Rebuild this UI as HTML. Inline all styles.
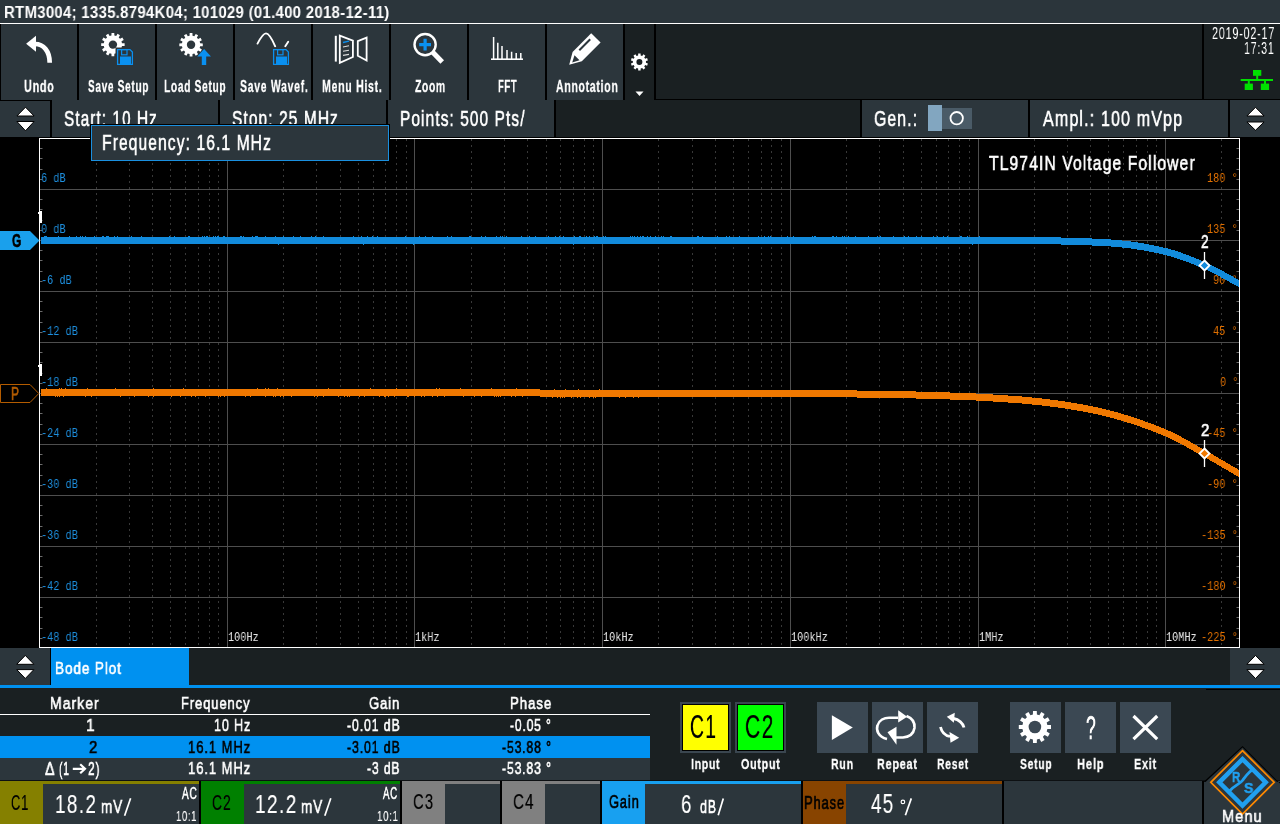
<!DOCTYPE html>
<html><head><meta charset="utf-8"><style>
html,body{margin:0;padding:0;background:#000;width:1280px;height:824px;overflow:hidden}
#root{position:relative;width:1280px;height:824px;overflow:hidden}
#root div,#root span,#root svg{position:absolute}
#root span{white-space:pre;transform-origin:0 0;will-change:transform}
</style></head><body><div id="root">
<div style="left:0px;top:0px;width:1280px;height:23px;background:#2b353b;z-index:0;"></div><div style="left:0px;top:23px;width:1280px;height:1px;background:#ffffff;z-index:0;"></div><div style="left:0px;top:24px;width:1280px;height:113px;background:#000;z-index:0;"></div><div style="left:1px;top:24px;width:76px;height:76px;background:#2c363c;z-index:0;"></div><div style="left:79px;top:24px;width:76px;height:76px;background:#2c363c;z-index:0;"></div><div style="left:157px;top:24px;width:76px;height:76px;background:#2c363c;z-index:0;"></div><div style="left:235px;top:24px;width:76px;height:76px;background:#2c363c;z-index:0;"></div><div style="left:313px;top:24px;width:76px;height:76px;background:#2c363c;z-index:0;"></div><div style="left:391px;top:24px;width:76px;height:76px;background:#2c363c;z-index:0;"></div><div style="left:469px;top:24px;width:76px;height:76px;background:#2c363c;z-index:0;"></div><div style="left:547px;top:24px;width:76px;height:76px;background:#2c363c;z-index:0;"></div><div style="left:625px;top:24px;width:29px;height:76px;background:#1a2022;z-index:0;"></div><div style="left:656px;top:24px;width:546px;height:75px;background:#1a2022;z-index:0;"></div><div style="left:1204px;top:24px;width:76px;height:75px;background:#1a2022;z-index:0;"></div><div style="left:0px;top:101px;width:50px;height:36px;background:#2c363c;z-index:0;"></div><div style="left:52px;top:100px;width:166px;height:37px;background:#2c363c;z-index:0;"></div><div style="left:220px;top:100px;width:166px;height:37px;background:#2c363c;z-index:0;"></div><div style="left:388px;top:100px;width:166px;height:37px;background:#2c363c;z-index:0;"></div><div style="left:556px;top:100px;width:304px;height:37px;background:#1a2022;z-index:0;"></div><div style="left:862px;top:100px;width:166px;height:37px;background:#2c363c;z-index:0;"></div><div style="left:1030px;top:100px;width:198px;height:37px;background:#2c363c;z-index:0;"></div><div style="left:1230px;top:100px;width:50px;height:37px;background:#2c363c;z-index:0;"></div><div style="left:928px;top:105px;width:14px;height:26px;background:#82a6c0;z-index:0;"></div><div style="left:942px;top:108px;width:30px;height:21px;background:#4a5b67;z-index:0;"></div><div style="left:0px;top:648px;width:50px;height:37px;background:#2c363c;z-index:0;"></div><div style="left:51px;top:648px;width:138px;height:37px;background:#0091f0;z-index:0;"></div><div style="left:189px;top:648px;width:1091px;height:37px;background:#1a2022;z-index:0;"></div><div style="left:0px;top:685px;width:1280px;height:3px;background:#0091f0;z-index:0;"></div><div style="left:0px;top:688px;width:1280px;height:93px;background:#1a2022;z-index:0;"></div><div style="left:0px;top:714px;width:650px;height:1px;background:#ffffff;z-index:0;"></div><div style="left:0px;top:736px;width:650px;height:22px;background:#0091f0;z-index:0;"></div><div style="left:0px;top:758px;width:650px;height:22px;background:#2c363c;z-index:0;"></div><div style="left:0px;top:780px;width:1280px;height:1px;background:#0d1012;z-index:0;"></div><div style="left:680px;top:702px;width:51px;height:51px;background:#3a4650;z-index:0;"></div><div style="left:682px;top:704px;width:47px;height:47px;background:#000;z-index:0;"></div><div style="left:683px;top:705px;width:45px;height:45px;background:#ffff00;z-index:0;"></div><div style="left:735px;top:702px;width:51px;height:51px;background:#3a4650;z-index:0;"></div><div style="left:737px;top:704px;width:47px;height:47px;background:#000;z-index:0;"></div><div style="left:738px;top:705px;width:45px;height:45px;background:#00ff00;z-index:0;"></div><div style="left:817px;top:702px;width:51px;height:51px;background:#3b4853;z-index:0;"></div><div style="left:872px;top:702px;width:51px;height:51px;background:#3b4853;z-index:0;"></div><div style="left:927px;top:702px;width:51px;height:51px;background:#3b4853;z-index:0;"></div><div style="left:1010px;top:702px;width:51px;height:51px;background:#3b4853;z-index:0;"></div><div style="left:1065px;top:702px;width:51px;height:51px;background:#3b4853;z-index:0;"></div><div style="left:1120px;top:702px;width:51px;height:51px;background:#3b4853;z-index:0;"></div><div style="left:0px;top:781px;width:1280px;height:43px;background:#000;z-index:0;"></div><div style="left:0px;top:781px;width:43px;height:43px;background:#858000;z-index:0;"></div><div style="left:43px;top:781px;width:156px;height:3px;background:#858000;z-index:0;"></div><div style="left:43px;top:784px;width:156px;height:40px;background:#2c363c;z-index:0;"></div><div style="left:201px;top:781px;width:43px;height:43px;background:#008000;z-index:0;"></div><div style="left:244px;top:781px;width:156px;height:3px;background:#008000;z-index:0;"></div><div style="left:244px;top:784px;width:156px;height:40px;background:#2c363c;z-index:0;"></div><div style="left:402px;top:781px;width:43px;height:43px;background:#808080;z-index:0;"></div><div style="left:445px;top:781px;width:55px;height:3px;background:#808080;z-index:0;"></div><div style="left:445px;top:784px;width:55px;height:40px;background:#2c363c;z-index:0;"></div><div style="left:502px;top:781px;width:43px;height:43px;background:#808080;z-index:0;"></div><div style="left:545px;top:781px;width:55px;height:3px;background:#808080;z-index:0;"></div><div style="left:545px;top:784px;width:55px;height:40px;background:#2c363c;z-index:0;"></div><div style="left:602px;top:781px;width:43px;height:43px;background:#18a0f0;z-index:0;"></div><div style="left:645px;top:781px;width:156px;height:3px;background:#18a0f0;z-index:0;"></div><div style="left:645px;top:784px;width:156px;height:40px;background:#2c363c;z-index:0;"></div><div style="left:803px;top:781px;width:43px;height:43px;background:#884400;z-index:0;"></div><div style="left:846px;top:781px;width:156px;height:3px;background:#884400;z-index:0;"></div><div style="left:846px;top:784px;width:156px;height:40px;background:#2c363c;z-index:0;"></div><div style="left:1004px;top:781px;width:198px;height:43px;background:#2c363c;z-index:0;"></div><div style="left:1206px;top:689px;width:74px;height:1px;background:#000;z-index:0;"></div><div style="left:1204px;top:781px;width:76px;height:43px;background:#2c363c;z-index:0;"></div><div style="left:1230px;top:648px;width:50px;height:37px;background:#2c363c;z-index:0;"></div>
<svg style="left:0;top:0;z-index:1" width="1280" height="824" viewBox="0 0 1280 824">
<path d="M96.5 139V647M129.5 139V647M152.5 139V647M170.5 139V647M185.5 139V647M198.5 139V647M209.5 139V647M218.5 139V647M283.5 139V647M316.5 139V647M340.5 139V647M358.5 139V647M373.5 139V647M385.5 139V647M396.5 139V647M406.5 139V647M471.5 139V647M504.5 139V647M527.5 139V647M546.5 139V647M560.5 139V647M573.5 139V647M584.5 139V647M593.5 139V647M658.5 139V647M692.5 139V647M715.5 139V647M733.5 139V647M748.5 139V647M761.5 139V647M771.5 139V647M781.5 139V647M846.5 139V647M879.5 139V647M903.5 139V647M921.5 139V647M936.5 139V647M948.5 139V647M959.5 139V647M969.5 139V647M1034.5 139V647M1067.5 139V647M1090.5 139V647M1108.5 139V647M1123.5 139V647M1136.5 139V647M1147.5 139V647M1156.5 139V647M1221.5 139V647" stroke="#383838" stroke-width="1" stroke-dasharray="2 4" fill="none"/>
<path d="M40 189.5H1239M40 240.5H1239M40 291.5H1239M40 342.5H1239M40 393.5H1239M40 444.5H1239M40 495.5H1239M40 546.5H1239M40 597.5H1239M227.5 139V647M414.5 139V647M602.5 139V647M790.5 139V647M978.5 139V647M1165.5 139V647" stroke="#4e4e4e" stroke-width="1" fill="none"/>
<path d="M40 148.5h2.5M1236.5 148.5h2.5M40 158.5h2.5M1236.5 158.5h2.5M40 169.5h2.5M1236.5 169.5h2.5M40 179.5h2.5M1236.5 179.5h2.5M40 199.5h2.5M1236.5 199.5h2.5M40 209.5h2.5M1236.5 209.5h2.5M40 220.5h2.5M1236.5 220.5h2.5M40 230.5h2.5M1236.5 230.5h2.5M40 250.5h2.5M1236.5 250.5h2.5M40 260.5h2.5M1236.5 260.5h2.5M40 271.5h2.5M1236.5 271.5h2.5M40 281.5h2.5M1236.5 281.5h2.5M40 301.5h2.5M1236.5 301.5h2.5M40 311.5h2.5M1236.5 311.5h2.5M40 322.5h2.5M1236.5 322.5h2.5M40 332.5h2.5M1236.5 332.5h2.5M40 352.5h2.5M1236.5 352.5h2.5M40 362.5h2.5M1236.5 362.5h2.5M40 373.5h2.5M1236.5 373.5h2.5M40 383.5h2.5M1236.5 383.5h2.5M40 403.5h2.5M1236.5 403.5h2.5M40 413.5h2.5M1236.5 413.5h2.5M40 424.5h2.5M1236.5 424.5h2.5M40 434.5h2.5M1236.5 434.5h2.5M40 454.5h2.5M1236.5 454.5h2.5M40 464.5h2.5M1236.5 464.5h2.5M40 475.5h2.5M1236.5 475.5h2.5M40 485.5h2.5M1236.5 485.5h2.5M40 505.5h2.5M1236.5 505.5h2.5M40 515.5h2.5M1236.5 515.5h2.5M40 526.5h2.5M1236.5 526.5h2.5M40 536.5h2.5M1236.5 536.5h2.5M40 556.5h2.5M1236.5 556.5h2.5M40 566.5h2.5M1236.5 566.5h2.5M40 577.5h2.5M1236.5 577.5h2.5M40 587.5h2.5M1236.5 587.5h2.5M40 607.5h2.5M1236.5 607.5h2.5M40 617.5h2.5M1236.5 617.5h2.5M40 628.5h2.5M1236.5 628.5h2.5M40 638.5h2.5M1236.5 638.5h2.5" stroke="#6a6a6a" stroke-width="1" fill="none"/>
<rect x="39.5" y="138.5" width="1200" height="509" stroke="#fff" stroke-width="1" fill="none"/>
</svg>
<svg style="left:0;top:0;z-index:3" width="1280" height="824" viewBox="0 0 1280 824">
<path d="M41 237V237H42H43H44V236H45H46H47V237H48H49H50H51H52H53H54H55H56H57H58V236H59V237H60H61H62H63H64H65H66H67H68H69V236H70V237H71H72H73H74H75H76V236H77V237H78H79H80V236H81V237H82V236H83V237H84H85V236H86V237H87H88H89H90H91H92H93H94V236H95V237H96H97H98H99H100H101H102V236H103H104V237H105H106V236H107H108H109V237H110H111H112H113H114V236H115V237H116H117V236H118V237H119H120H121H122H123H124H125H126H127H128H129H130H131V236H132V237H133H134H135H136H137H138H139H140H141V236H142V237H143H144H145H146H147H148H149H150H151H152H153H154H155H156H157H158H159H160H161H162H163H164H165H166H167H168H169V236H170V237H171H172H173H174V236H175V237H176H177H178H179H180H181H182H183H184H185H186H187H188V236H189H190V237H191H192H193H194H195H196H197H198H199H200H201H202V236H203V237H204V236H205V237H206V236H207H208V237H209H210H211H212H213V236H214V237H215V236H216V237H217V236H218H219V237H220H221H222H223V236H224H225V237H226H227H228H229H230H231H232H233H234H235H236H237H238H239H240V236H241H242V237H243V236H244V237H245H246H247H248H249H250H251H252V236H253V237H254H255V236H256H257H258V237H259H260H261H262H263H264H265V236H266V237H267H268H269H270H271H272H273H274H275V236H276V237H277H278H279H280H281H282H283V236H284V237H285H286H287H288H289H290H291H292H293V236H294V237H295H296H297H298H299H300V236H301V237H302H303H304H305H306H307H308H309H310H311V236H312V237H313H314H315V236H316V237H317H318H319H320H321H322H323V236H324V237H325H326H327H328H329H330H331H332H333H334H335H336H337H338H339H340H341H342H343H344H345H346H347H348H349H350H351H352H353V236H354V237H355H356H357H358H359H360H361V236H362V237H363H364H365H366H367V236H368V237H369H370H371H372V236H373V237H374H375H376H377V236H378V237H379H380H381H382H383H384H385H386H387H388H389H390H391H392H393H394H395H396H397H398H399H400H401H402H403H404H405V236H406V237H407H408H409H410H411H412H413H414H415H416H417H418H419V236H420V237H421H422H423H424H425V236H426V237H427H428H429H430H431H432V236H433V237H434H435H436H437H438H439H440H441H442H443H444H445H446H447V236H448V237H449H450H451V236H452V237H453H454H455H456H457H458H459H460H461H462H463H464H465H466H467H468H469V236H470H471V237H472H473H474H475H476H477H478H479H480H481V236H482V237H483H484H485V236H486V237H487H488H489H490H491H492H493H494H495H496V236H497V237H498H499H500V236H501V237H502V236H503V237H504H505H506V236H507V237H508H509H510H511H512H513H514H515H516H517H518H519H520H521V236H522V237H523H524H525H526H527H528H529V236H530V237H531H532H533H534H535V236H536V237H537H538H539H540H541H542H543H544H545H546H547H548V236H549V237H550H551H552H553H554H555V236H556V237H557H558H559V236H560V237H561H562H563V236H564V237H565H566H567H568H569H570H571H572H573H574V236H575V237H576H577H578H579V236H580H581V237H582H583H584H585H586V236H587V237H588H589V236H590V237H591H592H593H594V236H595V237H596V236H597H598V237H599H600H601H602H603V236H604V237H605V236H606V237H607H608H609H610H611H612H613H614H615H616H617H618H619H620H621H622H623H624H625H626H627H628H629H630V236H631V237H632V236H633V237H634V236H635V237H636H637V236H638V237H639H640V236H641V237H642V236H643H644V237H645H646H647V236H648V237H649H650V236H651V237H652H653H654H655V236H656V237H657H658H659H660H661V236H662V237H663V236H664V237H665H666H667H668H669H670V236H671H672V237H673H674H675H676H677H678H679H680H681H682H683H684H685H686H687H688H689H690H691H692H693H694H695H696H697V236H698H699V237H700H701H702V236H703V237H704H705H706H707H708H709H710H711H712H713H714H715H716H717V236H718V237H719H720H721H722H723H724H725H726V236H727V237H728H729V236H730V237H731H732H733H734H735H736H737H738H739V236H740V237H741H742H743H744H745H746H747H748H749H750H751H752H753H754H755H756H757H758V236H759V237H760H761H762H763H764V236H765V237H766H767H768V236H769V237H770V236H771V237H772H773H774H775H776H777H778H779H780H781H782H783H784H785H786H787V236H788V237H789H790H791H792H793V236H794V237H795H796H797H798H799H800H801H802H803H804H805H806H807H808H809H810H811H812V236H813V237H814V236H815H816V237H817H818H819H820H821H822H823H824H825H826H827H828H829H830H831H832V236H833H834V237H835H836V236H837V237H838H839H840H841H842V236H843V237H844V236H845V237H846H847H848V236H849V237H850H851H852H853H854H855V236H856V237H857H858H859H860H861H862H863H864H865H866H867H868V236H869V237H870H871H872H873H874H875H876H877V236H878V237H879H880V236H881V237H882H883H884H885H886H887H888H889H890H891H892H893V236H894V237H895H896H897H898H899H900H901H902H903H904V236H905V237H906H907H908V236H909V237H910H911H912H913H914H915H916V236H917V237H918H919H920H921V236H922V237H923H924H925H926H927H928H929H930H931H932H933V236H934V237H935H936H937V236H938V237H939H940H941H942H943V236H944V237H945H946H947V236H948V237H949H950H951H952H953H954H955H956H957H958H959H960V236H961H962V237H963H964H965H966H967V236H968V237H969H970H971H972H973H974H975H976H977H978H979V236H980V237H981H982H983H984H985H986H987H988H989H990H991H992H993H994H995H996H997H998H999H1000H1001H1002H1003H1004H1005H1006H1007H1008H1009H1010H1011H1012H1013H1014H1015H1016H1017H1018H1019H1020H1021H1022H1023H1024H1025H1026H1027H1028H1029H1030H1031H1032H1033H1034H1035H1036H1037H1038H1039H1040H1041H1042H1043H1044H1045H1046H1047H1048H1049H1050H1051H1052H1053H1054H1055H1056H1057H1058H1059H1060H1061V238H1062H1063H1064H1065H1066H1067H1068H1069H1070H1071H1072H1073H1074H1075H1076H1077H1078H1079H1080H1081H1082H1083H1084H1085H1086H1087H1088H1089H1090H1091H1092V239H1093H1094H1095H1096H1097H1098H1099H1100H1101H1102H1103H1104H1105H1106H1107H1108H1109H1110H1111V240H1112H1113H1114H1115H1116H1117H1118H1119H1120H1121H1122V241H1123H1124H1125H1126H1127H1128H1129H1130H1131V242H1132H1133H1134H1135H1136H1137H1138V243H1139H1140H1141H1142H1143H1144V244H1145H1146H1147H1148H1149V245H1150H1151H1152H1153H1154V246H1155H1156H1157H1158H1159V247H1160H1161H1162H1163V248H1164H1165H1166H1167H1168V249H1169H1170H1171V250H1172H1173H1174H1175V251H1176H1177H1178V252H1179H1180H1181V253H1182H1183V254H1184H1185H1186V255H1187H1188H1189V256H1190H1191V257H1192H1193H1194V258H1195H1196V259H1197H1198H1199V260H1200H1201V261H1202H1203V262H1204H1205H1206V263H1207H1208V264H1209H1210V265H1211H1212V266H1213H1214V267H1215H1216V268H1217H1218V269H1219H1220V270H1221H1222V271H1223H1224V272H1225V273H1226H1227V274H1228H1229V275H1230H1231V276H1232H1233V277H1234V278H1235H1236V279H1237H1238V280H1239V287H1238V286H1237H1236V285H1235H1234V284H1233H1232V283H1231H1230V282H1229V281H1228H1227V280H1226H1225V279H1224H1223V278H1222H1221V277H1220V276H1219H1218V275H1217H1216V274H1215H1214V273H1213H1212V272H1211H1210V271H1209H1208V270H1207H1206V269H1205H1204H1203V268H1202H1201V267H1200H1199H1198V266H1197H1196V265H1195H1194V264H1193H1192H1191V263H1190H1189V262H1188H1187H1186V261H1185H1184H1183V260H1182H1181H1180V259H1179H1178H1177V258H1176H1175H1174V257H1173H1172H1171V256H1170H1169H1168H1167V255H1166H1165H1164H1163V254H1162H1161H1160H1159V253H1158H1157H1156H1155H1154V252H1153H1152H1151H1150H1149V251H1148H1147H1146H1145H1144V250H1143H1142H1141H1140H1139H1138H1137V249H1136H1135H1134H1133H1132H1131V248H1130H1129H1128H1127H1126H1125H1124H1123H1122V247H1121H1120H1119H1118H1117H1116H1115H1114H1113H1112H1111V246H1110H1109H1108H1107H1106H1105H1104H1103H1102H1101H1100H1099H1098H1097H1096H1095H1094H1093H1092V245H1091H1090H1089H1088H1087H1086H1085H1084H1083H1082H1081H1080H1079H1078H1077H1076H1075H1074H1073H1072H1071H1070H1069H1068H1067H1066H1065H1064H1063H1062H1061V244H1060H1059H1058H1057H1056H1055H1054H1053H1052H1051H1050H1049H1048H1047H1046H1045H1044H1043H1042H1041H1040H1039H1038H1037H1036H1035H1034H1033H1032H1031H1030H1029H1028H1027H1026H1025H1024H1023H1022H1021H1020H1019H1018H1017H1016H1015H1014H1013H1012H1011H1010H1009H1008H1007H1006H1005H1004H1003H1002H1001H1000H999H998H997H996H995H994H993H992H991H990H989H988H987H986H985H984H983H982H981H980H979H978H977H976H975H974H973V245H972V244H971H970H969H968H967H966H965H964H963H962H961H960H959H958H957H956H955H954H953H952H951H950H949H948H947H946H945H944H943H942H941H940H939H938H937H936H935H934H933H932H931H930H929H928H927H926H925H924H923H922H921H920H919H918H917H916H915H914H913H912H911H910H909H908H907H906H905H904H903H902H901H900H899H898H897H896H895H894H893H892H891H890H889H888H887H886H885H884H883H882H881H880H879H878H877H876H875H874H873H872H871H870H869H868H867H866H865H864H863H862H861H860H859H858H857H856H855H854H853H852H851H850H849H848H847H846H845H844H843H842H841H840H839H838H837H836H835H834H833H832H831H830H829H828H827H826H825H824H823H822H821H820H819H818H817H816H815H814H813H812H811H810H809H808H807H806H805H804H803H802H801H800H799H798H797H796H795H794H793H792H791H790H789H788H787H786H785H784H783H782H781H780H779H778H777H776H775H774H773H772H771H770H769H768H767H766H765H764H763H762H761H760H759H758H757H756H755H754H753H752H751H750H749H748H747H746H745H744H743H742H741H740H739H738H737H736H735H734H733H732H731H730H729H728H727H726H725H724H723H722H721H720H719H718H717H716H715H714H713H712H711H710H709H708H707H706H705H704H703H702H701H700H699H698H697H696H695H694H693H692H691H690H689H688H687H686H685H684H683H682H681H680H679H678H677H676H675H674H673H672H671H670H669H668H667H666H665H664H663H662H661H660H659H658H657H656H655H654H653H652H651H650H649H648H647H646H645H644H643H642H641H640H639H638H637H636H635H634H633H632H631H630H629H628H627H626H625H624H623H622H621H620H619H618H617H616H615H614H613H612H611H610H609H608H607H606H605H604H603H602H601H600H599H598H597H596H595H594H593H592H591H590H589H588H587H586H585H584H583H582H581H580H579H578H577H576H575H574V245H573V244H572H571H570H569H568H567H566H565H564H563H562H561H560H559H558H557H556H555H554H553H552H551H550H549H548H547H546H545H544H543H542H541H540H539H538H537H536H535H534H533H532H531H530H529H528H527H526H525H524H523H522H521H520H519H518H517H516H515H514H513H512H511H510H509H508H507H506H505H504H503H502H501H500H499H498H497H496H495H494H493H492H491H490H489H488H487H486H485H484H483H482H481H480H479H478H477H476H475H474H473H472H471H470H469H468H467H466H465H464H463H462H461H460H459H458H457H456H455H454H453H452H451H450H449H448H447H446H445H444H443H442H441H440H439H438H437H436H435H434H433H432H431H430H429H428H427H426H425H424H423H422H421H420H419H418H417H416H415H414V245H413V244H412H411H410H409H408H407H406H405H404H403H402H401H400H399H398H397H396H395H394H393H392H391H390H389H388H387H386H385H384H383H382H381H380H379H378H377H376H375H374H373H372H371H370H369H368H367H366H365H364V245H363V244H362H361H360H359H358H357H356H355H354H353H352H351H350H349H348H347H346H345H344H343H342H341H340H339H338H337H336H335H334H333H332H331H330H329H328H327H326H325H324H323H322H321H320H319H318H317H316H315H314H313H312H311H310H309H308H307H306H305H304H303H302H301H300H299H298H297H296H295H294H293H292H291H290H289H288H287H286H285H284H283H282H281H280H279V245H278V244H277H276H275H274H273H272H271H270H269H268H267H266H265H264H263H262H261H260H259H258H257H256H255H254H253H252H251H250H249H248H247H246H245H244H243H242H241H240H239H238H237H236H235H234H233H232H231H230H229H228H227H226H225H224H223H222H221H220H219H218H217H216H215H214H213H212H211H210H209H208H207H206H205H204H203H202H201H200H199H198H197H196H195H194H193H192H191H190H189H188H187H186H185H184H183H182H181H180H179H178H177H176H175H174H173H172H171H170H169H168H167H166H165H164H163H162H161H160H159H158H157H156H155H154H153H152H151H150H149H148H147H146H145H144H143H142H141H140H139H138H137H136H135H134H133H132H131H130H129H128H127H126H125H124H123H122H121H120H119H118H117H116H115H114H113H112H111H110H109H108H107H106H105H104H103H102H101H100H99H98H97H96H95H94H93H92H91H90H89H88H87H86H85H84H83H82H81H80H79H78H77H76H75H74H73H72H71H70H69H68H67H66H65H64H63H62H61H60H59H58H57H56H55H54H53H52H51H50H49H48H47H46H45H44H43H42H41Z" fill="#128bdc" shape-rendering="crispEdges"/>
<path d="M41 389V389H42H43H44H45H46V388H47V389H48H49H50H51H52H53H54H55H56H57H58H59V388H60V389H61V388H62V389H63H64H65V388H66V389H67H68H69H70H71H72H73H74H75H76H77H78H79H80H81H82H83H84H85H86H87V388H88V389H89H90H91H92H93H94H95H96H97H98H99H100H101H102H103H104H105H106H107H108H109H110H111H112H113H114H115V388H116V389H117H118H119H120H121H122H123H124H125H126H127H128H129H130H131H132H133H134H135H136H137H138H139H140H141H142H143H144H145H146H147H148H149H150H151H152H153V388H154V389H155H156H157H158H159H160H161H162H163H164H165H166H167H168H169H170H171H172H173H174H175H176H177H178H179H180H181H182H183V388H184V389H185H186H187H188H189H190H191H192H193H194H195H196H197H198H199H200H201H202H203H204H205H206H207H208H209H210H211H212H213H214H215H216H217H218H219H220H221H222H223H224H225H226H227H228H229H230H231H232H233H234H235H236H237H238H239H240H241H242H243H244H245H246H247H248H249H250H251H252H253H254H255H256H257V388H258V389H259H260H261H262H263H264H265V388H266V389H267H268V388H269V389H270H271H272H273H274H275H276H277V388H278V389H279H280H281H282H283H284H285H286H287H288H289H290H291H292H293H294H295H296H297H298H299H300H301H302H303H304H305H306H307H308H309H310H311H312H313H314H315H316H317H318H319H320H321H322H323H324H325H326H327H328V388H329V389H330H331H332H333H334H335H336H337H338H339H340H341H342H343H344H345H346H347H348H349H350H351H352H353H354H355H356H357H358H359H360H361H362H363H364H365H366H367H368H369H370V388H371V389H372H373H374H375H376H377H378H379H380H381H382H383H384H385H386H387H388H389H390H391H392H393H394H395H396V388H397V389H398H399H400H401H402H403H404H405H406H407H408H409H410H411H412H413H414H415H416H417H418H419H420H421H422H423H424H425H426H427H428H429H430H431H432H433H434H435H436V388H437V389H438H439V388H440V389H441H442H443H444H445H446H447H448H449H450H451H452H453H454H455H456H457H458H459H460V388H461V389H462H463H464H465H466H467H468H469H470H471H472H473H474H475H476H477H478H479H480H481H482H483H484H485H486H487H488H489H490H491V388H492V389H493H494H495H496H497H498H499H500H501H502H503H504H505H506H507H508H509H510H511H512H513H514H515H516V388H517V389H518H519H520H521H522H523H524H525H526H527H528H529H530H531H532H533H534H535H536H537H538H539H540V390H541H542H543H544H545H546H547H548H549H550H551H552H553H554V389H555V390H556H557H558H559H560H561H562H563H564H565V389H566V390H567H568H569H570H571H572H573H574H575H576H577H578V389H579V390H580H581H582H583H584H585H586H587H588H589H590H591H592H593H594H595H596H597H598H599V389H600V390H601H602H603H604H605H606H607H608H609H610H611H612H613H614H615H616H617H618H619H620H621H622H623H624H625H626H627H628H629H630H631H632H633H634H635H636H637H638H639H640H641H642H643H644H645H646H647H648H649H650H651H652H653H654H655H656H657H658H659H660H661H662H663H664H665H666H667H668H669H670H671H672H673H674H675H676H677H678H679H680H681H682H683H684H685H686H687H688H689H690H691H692H693H694H695H696H697H698H699H700H701H702H703H704H705H706H707H708H709H710H711H712H713H714H715H716H717H718H719H720H721H722H723H724H725H726H727H728H729H730H731H732H733H734H735H736H737H738H739H740H741H742H743H744H745H746H747H748H749H750H751H752H753H754H755H756H757H758H759H760H761H762H763H764H765H766H767H768H769H770H771H772H773H774H775H776H777H778H779H780H781H782H783H784H785H786H787H788H789H790H791H792H793H794H795H796H797H798H799H800H801H802H803H804H805H806H807H808H809H810H811H812H813H814H815H816H817H818H819H820H821H822H823H824H825H826H827H828H829H830H831H832H833H834H835H836H837H838H839H840H841H842H843H844H845H846H847H848H849H850H851H852H853H854H855H856H857V391H858H859H860H861H862H863H864H865H866H867H868H869H870H871H872H873H874H875H876H877H878H879H880H881H882H883H884H885H886H887H888H889H890H891H892H893H894H895H896H897H898H899H900H901H902H903H904H905H906H907H908H909H910H911H912H913H914H915H916V392H917H918H919H920H921H922H923H924H925H926H927H928H929H930H931H932H933H934H935H936H937H938H939H940H941H942H943H944H945H946H947H948H949H950V393H951H952H953H954H955H956H957H958H959H960H961H962H963H964H965H966H967H968H969H970H971H972H973H974H975H976V394H977H978H979H980H981H982H983H984H985H986H987H988H989H990H991H992H993V395H994H995H996H997H998H999H1000H1001H1002H1003H1004H1005H1006H1007H1008V396H1009H1010H1011H1012H1013H1014H1015H1016H1017H1018H1019H1020H1021H1022V397H1023H1024H1025H1026H1027H1028H1029H1030H1031H1032V398H1033H1034H1035H1036H1037H1038H1039H1040H1041H1042V399H1043H1044H1045H1046H1047H1048H1049H1050V400H1051H1052H1053H1054H1055H1056H1057H1058V401H1059H1060H1061H1062H1063H1064H1065V402H1066H1067H1068H1069H1070H1071V403H1072H1073H1074H1075H1076H1077V404H1078H1079H1080H1081H1082H1083V405H1084H1085H1086H1087H1088V406H1089H1090H1091H1092H1093V407H1094H1095H1096H1097H1098V408H1099H1100H1101H1102V409H1103H1104H1105H1106V410H1107H1108H1109H1110V411H1111H1112H1113H1114V412H1115H1116H1117H1118V413H1119H1120H1121V414H1122H1123H1124V415H1125H1126H1127H1128V416H1129H1130H1131V417H1132H1133H1134V418H1135H1136H1137V419H1138H1139H1140V420H1141H1142H1143V421H1144H1145V422H1146H1147H1148V423H1149H1150H1151V424H1152H1153H1154V425H1155H1156V426H1157H1158H1159V427H1160H1161V428H1162H1163H1164V429H1165H1166V430H1167H1168V431H1169H1170H1171V432H1172H1173V433H1174H1175V434H1176H1177V435H1178H1179V436H1180H1181V437H1182V438H1183H1184V439H1185H1186V440H1187H1188V441H1189H1190V442H1191V443H1192H1193V444H1194H1195V445H1196H1197V446H1198V447H1199H1200V448H1201H1202V449H1203H1204V450H1205V451H1206H1207V452H1208H1209V453H1210H1211V454H1212H1213V455H1214V456H1215H1216V457H1217H1218V458H1219V459H1220H1221V460H1222H1223V461H1224H1225V462H1226V463H1227H1228V464H1229H1230V465H1231V466H1232H1233V467H1234H1235V468H1236H1237V469H1238V470H1239V477H1238V476H1237H1236V475H1235H1234V474H1233V473H1232H1231V472H1230H1229V471H1228V470H1227H1226V469H1225H1224V468H1223H1222V467H1221V466H1220H1219V465H1218H1217V464H1216V463H1215H1214V462H1213H1212V461H1211H1210V460H1209V459H1208H1207V458H1206H1205V457H1204H1203V456H1202H1201V455H1200V454H1199H1198V453H1197H1196V452H1195H1194V451H1193V450H1192H1191V449H1190H1189V448H1188H1187V447H1186V446H1185H1184V445H1183H1182V444H1181H1180V443H1179H1178V442H1177H1176V441H1175H1174V440H1173H1172V439H1171H1170V438H1169H1168V437H1167H1166V436H1165H1164H1163V435H1162H1161V434H1160H1159H1158V433H1157H1156V432H1155H1154H1153V431H1152H1151V430H1150H1149H1148V429H1147H1146H1145V428H1144H1143H1142V427H1141H1140V426H1139H1138H1137V425H1136H1135H1134V424H1133H1132H1131V423H1130H1129H1128H1127V422H1126H1125H1124V421H1123H1122H1121V420H1120H1119H1118H1117V419H1116H1115H1114V418H1113H1112H1111H1110V417H1109H1108H1107H1106V416H1105H1104H1103H1102V415H1101H1100H1099H1098V414H1097H1096H1095H1094H1093V413H1092H1091H1090H1089H1088V412H1087H1086H1085H1084H1083V411H1082H1081H1080H1079H1078H1077V410H1076H1075H1074H1073H1072H1071V409H1070H1069H1068H1067H1066H1065V408H1064H1063H1062H1061H1060H1059H1058V407H1057H1056H1055H1054H1053H1052H1051H1050V406H1049H1048H1047H1046H1045H1044H1043H1042V405H1041H1040H1039H1038H1037H1036H1035H1034H1033H1032V404H1031H1030H1029H1028H1027H1026H1025H1024H1023H1022V403H1021H1020H1019H1018H1017H1016H1015H1014H1013H1012H1011H1010H1009H1008V402H1007H1006H1005H1004H1003H1002H1001H1000H999H998H997H996H995H994H993V401H992H991H990H989H988H987H986H985H984H983H982H981H980H979H978H977H976V400H975H974H973H972H971H970H969H968H967H966H965H964H963H962H961H960H959H958H957H956H955H954H953H952H951H950V399H949H948H947H946H945H944H943H942H941H940H939H938H937H936H935H934H933H932H931H930H929H928H927H926H925H924H923H922H921H920H919H918H917H916V398H915H914H913H912H911H910H909H908H907H906H905H904H903H902H901H900H899H898H897H896H895H894H893H892H891H890H889H888H887H886H885H884H883H882H881H880H879H878H877H876H875H874H873H872H871H870H869H868H867H866H865H864H863H862H861H860H859H858H857V397H856H855H854H853H852H851H850H849H848H847H846H845H844H843H842H841H840H839H838H837H836H835H834H833H832H831H830H829H828H827H826H825H824H823H822H821H820H819H818H817H816H815H814H813H812H811H810H809H808H807H806H805H804H803H802H801H800H799H798H797H796H795H794H793H792H791H790H789H788H787H786H785H784H783H782H781H780H779H778H777H776H775H774H773H772H771H770H769H768H767H766H765H764H763H762H761H760H759H758H757H756H755H754H753H752H751H750H749H748H747H746H745H744H743H742H741H740H739H738H737H736H735H734H733H732H731H730H729H728H727H726H725H724H723H722H721H720H719H718H717H716H715H714H713H712H711H710H709H708H707H706H705H704H703H702H701H700H699H698H697H696H695H694H693H692H691H690H689H688H687H686H685H684H683H682H681H680H679H678H677H676H675H674H673H672H671H670H669H668H667H666H665H664H663H662H661H660H659H658H657H656H655H654H653H652H651H650H649H648H647H646H645H644H643H642H641H640H639V398H638V397H637H636H635H634V398H633V397H632H631H630H629H628H627H626V398H625V397H624H623H622H621H620V398H619V397H618H617H616H615H614H613H612H611H610H609H608H607H606H605H604H603H602H601H600H599H598H597H596V398H595V397H594V398H593V397H592H591H590V398H589V397H588H587H586H585H584H583H582H581V398H580V397H579H578V398H577V397H576H575H574H573H572V398H571V397H570H569H568H567H566H565V398H564V397H563V398H562V397H561V398H560V397H559H558V398H557V397H556H555H554H553V398H552V397H551H550H549H548H547H546H545H544H543H542H541H540V396H539H538H537H536H535H534H533H532H531H530H529H528H527H526H525H524H523V397H522V396H521H520H519H518H517H516V397H515V396H514H513H512V397H511V396H510H509H508H507H506H505H504H503H502H501V397H500V396H499V397H498V396H497V397H496V396H495V397H494V396H493H492H491H490H489H488H487H486H485H484H483H482V397H481V396H480H479H478H477H476H475V397H474V396H473H472H471H470H469H468H467H466H465H464V397H463V396H462H461H460H459H458H457H456H455H454H453H452H451H450H449H448H447H446H445V397H444V396H443H442H441H440H439H438V397H437V396H436H435H434H433V397H432V396H431H430H429H428H427H426H425V397H424V396H423H422V397H421V396H420H419H418H417H416H415V397H414V396H413H412H411H410H409V397H408H407V396H406H405H404H403H402H401H400H399H398H397H396H395V397H394V396H393H392H391H390H389V397H388V396H387H386V397H385H384V396H383H382H381H380V397H379V396H378H377H376H375H374H373H372H371H370H369H368H367H366H365V397H364V396H363H362H361H360V397H359V396H358H357H356H355H354H353H352H351H350V397H349V396H348V397H347V396H346H345V397H344V396H343H342H341H340H339V397H338V396H337H336H335H334H333H332H331H330H329H328H327H326H325H324V397H323V396H322H321H320H319H318V397H317V396H316H315V397H314V396H313H312H311H310H309H308H307H306H305H304H303H302H301H300H299H298H297H296H295H294H293H292V397H291V396H290H289H288H287H286H285H284V397H283V396H282H281V397H280V396H279H278H277H276V397H275V396H274V397H273V396H272H271H270H269H268H267H266V397H265V396H264H263H262H261H260H259H258H257H256H255H254H253H252H251V397H250V396H249H248H247H246V397H245V396H244H243H242H241H240H239H238H237H236H235H234H233H232H231H230H229H228H227H226H225V397H224V396H223H222H221V397H220V396H219V397H218V396H217H216H215H214H213H212H211H210H209H208H207H206V397H205V396H204H203H202H201H200H199H198H197H196V397H195V396H194H193H192V397H191V396H190H189H188H187H186H185H184H183H182H181V397H180V396H179H178H177H176H175H174H173H172V397H171V396H170H169H168H167H166H165H164H163H162H161H160H159H158H157H156H155H154V397H153V396H152H151H150H149V397H148V396H147H146H145H144H143H142H141H140H139H138H137H136H135V397H134V396H133H132H131H130H129H128H127H126H125H124H123H122H121V397H120V396H119H118H117H116H115H114H113H112H111H110H109H108H107H106H105H104H103H102H101H100H99H98H97H96H95H94H93H92V397H91V396H90H89H88H87H86V397H85V396H84H83H82H81H80H79H78H77H76H75H74H73H72H71H70H69H68H67H66H65H64V397H63V396H62H61H60V397H59V396H58V397H57V396H56V397H55V396H54H53H52H51H50H49H48H47H46H45H44H43H42H41Z" fill="#f07800" shape-rendering="crispEdges"/>
<polygon points="0,231 30,231 39.5,240.5 30,250 0,250" fill="#1aa0ec"/>
<polygon points="0.5,384.5 30,384.5 38.8,393.5 30,402.5 0.5,402.5" fill="none" stroke="#b45c00" stroke-width="1"/>
<path d="M1204.5 252.0V279.0" stroke="#fff" stroke-width="1.3"/>
<polygon points="1204.5,260.5 1209.5,265.5 1204.5,270.5 1199.5,265.5" fill="#128bdc" stroke="#fff" stroke-width="1.8"/>
<path d="M39 211h3v12h-3zM38 212h1v2h-1z" fill="#fff"/>
<path d="M39 364h3v12h-3zM38 365h1v2h-1z" fill="#fff"/>
<path d="M1204.5 440.0V467.0" stroke="#fff" stroke-width="1.3"/>
<polygon points="1204.5,448.5 1209.5,453.5 1204.5,458.5 1199.5,453.5" fill="#f07800" stroke="#fff" stroke-width="1.8"/>
<polygon points="26.1,43.8 36,35.8 36,51.8" fill="#fff"/>
<path d="M35 44 C43.5 44 49.7 51 49.7 62.8" stroke="#fff" stroke-width="4.7" fill="none"/>
<polygon points="111.44,35.52 111.51,32.88 114.29,32.88 114.36,35.52 116.17,36.00 117.56,33.76 119.96,35.15 118.71,37.47 120.03,38.79 122.35,37.54 123.74,39.94 121.50,41.33 121.98,43.14 124.62,43.21 124.62,45.99 121.98,46.06 121.50,47.87 123.74,49.26 122.35,51.66 120.03,50.41 118.71,51.73 119.96,54.05 117.56,55.44 116.17,53.20 114.36,53.68 114.29,56.32 111.51,56.32 111.44,53.68 109.63,53.20 108.24,55.44 105.84,54.05 107.09,51.73 105.77,50.41 103.45,51.66 102.06,49.26 104.30,47.87 103.82,46.06 101.18,45.99 101.18,43.21 103.82,43.14 104.30,41.33 102.06,39.94 103.45,37.54 105.77,38.79 107.09,37.47 105.84,35.15 108.24,33.76 109.63,36.00" fill="#fff"/>
<circle cx="112.9" cy="44.6" r="4.2" fill="#2c363c"/>
<path d="M115.5 47.5h13.5l4.5 4.5v13.5h-18z" fill="#2c363c"/>
<path d="M117.6 49.6h12.4l2.4 2.4v12.4h-14.8z" fill="none" stroke="#0a90f0" stroke-width="1.3"/>
<rect x="121.6" y="49.6" width="5.4" height="5.2" fill="none" stroke="#0a90f0" stroke-width="1.2"/>
<rect x="120" y="56.5" width="11" height="8" fill="#0a90f0"/>
<polygon points="189.59,35.72 189.66,33.08 192.44,33.08 192.51,35.72 194.32,36.20 195.71,33.96 198.11,35.35 196.86,37.67 198.18,38.99 200.50,37.74 201.89,40.14 199.65,41.53 200.13,43.34 202.77,43.41 202.77,46.19 200.13,46.26 199.65,48.07 201.89,49.46 200.50,51.86 198.18,50.61 196.86,51.93 198.11,54.25 195.71,55.64 194.32,53.40 192.51,53.88 192.44,56.52 189.66,56.52 189.59,53.88 187.78,53.40 186.39,55.64 183.99,54.25 185.24,51.93 183.92,50.61 181.60,51.86 180.21,49.46 182.45,48.07 181.97,46.26 179.33,46.19 179.33,43.41 181.97,43.34 182.45,41.53 180.21,40.14 181.60,37.74 183.92,38.99 185.24,37.67 183.99,35.35 186.39,33.96 187.78,36.20" fill="#fff"/>
<circle cx="191.05" cy="44.8" r="4.2" fill="#2c363c"/>
<polygon points="196.3,57.2 204.1,48.3 211.8,57.2" fill="#2c363c"/>
<polygon points="197.3,56.6 204.1,48.9 211,56.6" fill="#0a90f0"/>
<rect x="201.8" y="56" width="4.4" height="9" fill="#0a90f0"/>
<path d="M257.5 43.6 C261 37 263.5 33.4 266 33.4 C268.5 33.4 272 39 275.2 46.3 M285.3 46.2 L288.2 41.8" stroke="#fff" stroke-width="1.9" fill="none" stroke-linecap="round"/>
<path d="M271.5 47.5h13.5l4.5 4.5v13.5h-18z" fill="#2c363c"/>
<path d="M273.6 49.6h12.4l2.4 2.4v12.4h-14.8z" fill="none" stroke="#0a90f0" stroke-width="1.3"/>
<rect x="277.6" y="49.6" width="5.4" height="5.2" fill="none" stroke="#0a90f0" stroke-width="1.2"/>
<rect x="276" y="56.5" width="11" height="8" fill="#0a90f0"/>
<path d="M335.8 35.8V61.6" stroke="#fff" stroke-width="2"/>
<polygon points="339.8,35.6 352.9,40.6 352.9,57.0 339.8,62.8" fill="none" stroke="#fff" stroke-width="1.8"/>
<polygon points="357.8,41.2 366.6,37.6 366.6,60.6 357.8,55.8" fill="none" stroke="#fff" stroke-width="1.8"/>
<path d="M343 42.5l6 -1.3" stroke="#0a90f0" stroke-width="1.3"/>
<path d="M343 47l6 -1.2M343 51.2l6 -1M343 55.4l6 -1" stroke="#ddd" stroke-width="1.1"/>
<circle cx="425.1" cy="44.6" r="10.6" fill="none" stroke="#fff" stroke-width="2.4"/>
<path d="M419.2 44.6h11.8M425.1 38.7v11.8" stroke="#0a90f0" stroke-width="3.2"/>
<path d="M432.5 52 L442.2 62" stroke="#fff" stroke-width="5"/>
<path d="M491 59.2h32" stroke="#fff" stroke-width="1.6"/>
<path d="M493.6 60V37M497.8 60V42.8M502 60V46M507 60V50M511.6 60V51.8M516.2 60V53M520.8 60V53" stroke="#fff" stroke-width="1.5"/>
<path d="M591.2 33.3 L600.6 42.5 L581.8 61.3 L569.2 64.8 L572.6 52.1 Z" fill="#fff"/>
<path d="M590.2 39.3 L579.3 50.2" stroke="#2c363c" stroke-width="2"/>
<polygon points="572.2,62.6 574.5,55.3 579.5,60.3" fill="#2c363c"/>
<polygon points="638.14,55.42 638.19,53.39 640.61,53.39 640.66,55.42 642.19,55.92 643.42,54.30 645.38,55.72 644.23,57.40 645.17,58.70 647.12,58.12 647.87,60.42 645.95,61.09 645.95,62.71 647.87,63.38 647.12,65.68 645.17,65.10 644.23,66.40 645.38,68.08 643.42,69.50 642.19,67.88 640.66,68.38 640.61,70.41 638.19,70.41 638.14,68.38 636.61,67.88 635.38,69.50 633.42,68.08 634.57,66.40 633.63,65.10 631.68,65.68 630.93,63.38 632.85,62.71 632.85,61.09 630.93,60.42 631.68,58.12 633.63,58.70 634.57,57.40 633.42,55.72 635.38,54.30 636.61,55.92" fill="#fff"/>
<circle cx="639.4" cy="61.9" r="3.0" fill="#1a2022"/>
<polygon points="635.5,91.5 643.5,91.5 639.5,96" fill="#fff"/>
<g fill="#00e000"><rect x="1253" y="70" width="8.3" height="5.8"/><rect x="1256.2" y="75" width="2" height="4"/><rect x="1240.7" y="79" width="32.3" height="2"/><rect x="1247.8" y="80" width="2" height="4"/><rect x="1264" y="80" width="2" height="4"/><rect x="1244.7" y="83.6" width="8.2" height="6.4"/><rect x="1260.8" y="83.6" width="8.3" height="6.4"/></g>
<circle cx="956.7" cy="118.2" r="6.2" fill="none" stroke="#fff" stroke-width="1.8"/>
<polygon points="16.9,116 25.5,107.2 34.1,116" fill="#fff" stroke="#000" stroke-width="1.0" stroke-linejoin="round"/>
<polygon points="16.9,121.5 34.1,121.5 25.5,130.8" fill="#fff" stroke="#000" stroke-width="1.0" stroke-linejoin="round"/>
<polygon points="1246.9,116 1255.5,107.3 1264.1,116" fill="#fff" stroke="#000" stroke-width="1.0" stroke-linejoin="round"/>
<polygon points="1246.9,122 1264.1,122 1255.5,130.3" fill="#fff" stroke="#000" stroke-width="1.0" stroke-linejoin="round"/>
<polygon points="16.700000000000003,664.3 25.3,655.4 33.9,664.3" fill="#fff" stroke="#000" stroke-width="1.0" stroke-linejoin="round"/>
<polygon points="16.700000000000003,669.6 33.9,669.6 25.3,678.5" fill="#fff" stroke="#000" stroke-width="1.0" stroke-linejoin="round"/>
<polygon points="1246.9,664.3 1255.5,655.4 1264.1,664.3" fill="#fff" stroke="#000" stroke-width="1.0" stroke-linejoin="round"/>
<polygon points="1246.9,669.6 1264.1,669.6 1255.5,678.5" fill="#fff" stroke="#000" stroke-width="1.0" stroke-linejoin="round"/>
<polygon points="831.9,715.2 852.8,727.5 831.9,739.9" fill="#fff"/>
<path d="M887 739 C878 737 876 730 877.5 725.5 C879 720.5 884 717.5 890 717.8 L898 717.8 M906.5 716 C913 718.5 915 723 914.5 728 C913.5 734 909 737 903 737.5 L893.5 737.5" stroke="#fff" stroke-width="2.6" fill="none"/>
<polygon points="898.2,710.2 907.2,716.8 898.2,722.5" fill="#fff"/>
<polygon points="887.5,732.2 896.5,726.8 896.5,744.8" fill="#fff"/>
<path d="M953.5 718.5 C959 719.5 963 723.5 964 727.5 M940.5 727 C941.5 731.5 945 735.5 950 736.5" stroke="#fff" stroke-width="2.8" fill="none"/>
<polygon points="946.8,716.8 954.8,712.8 953.8,722.8" fill="#fff"/>
<polygon points="949.5,732 959.2,737.7 950.5,742.7" fill="#fff"/>
<polygon points="1032.90,714.56 1033.00,710.91 1036.80,710.91 1036.90,714.56 1039.38,715.23 1041.29,712.12 1044.59,714.02 1042.86,717.23 1044.67,719.04 1047.88,717.31 1049.78,720.61 1046.67,722.52 1047.34,725.00 1050.99,725.10 1050.99,728.90 1047.34,729.00 1046.67,731.48 1049.78,733.39 1047.88,736.69 1044.67,734.96 1042.86,736.77 1044.59,739.98 1041.29,741.88 1039.38,738.77 1036.90,739.44 1036.80,743.09 1033.00,743.09 1032.90,739.44 1030.42,738.77 1028.51,741.88 1025.21,739.98 1026.94,736.77 1025.13,734.96 1021.92,736.69 1020.02,733.39 1023.13,731.48 1022.46,729.00 1018.81,728.90 1018.81,725.10 1022.46,725.00 1023.13,722.52 1020.02,720.61 1021.92,717.31 1025.13,719.04 1026.94,717.23 1025.21,714.02 1028.51,712.12 1030.42,715.23" fill="#fff"/>
<circle cx="1034.9" cy="727.0" r="6.3" fill="#3b4853"/>
<path d="M1133.5 716 L1157.2 739.2 M1157.2 716 L1133.5 739.2" stroke="#fff" stroke-width="3.2"/>
<polygon points="1203.5,782 1242.5,746 1280,783.5 1280,782" fill="#000"/>
<polygon points="1205,782.6 1242.5,747.6 1280,785.1 1280,790 1205,790" fill="#2c363c"/>
<polygon points="1242.5,750.6 1274.2,782.3 1242.5,814 1210.8,782.3" fill="none" stroke="#ff8a00" stroke-width="1.7"/>
<polygon points="1242.5,759.1 1265.7,782.3 1242.5,805.5 1219.3,782.3" fill="none" stroke="#20a0f0" stroke-width="4.5"/>
<path d="M1229 791.5 C1234 785.5 1239.5 784.5 1242.5 780.5 C1245.5 776.5 1249 771 1254.5 768.5" stroke="#20a0f0" stroke-width="2.8" fill="none"/>
<path d="M72.8 768.8H84.5M80.2 764.3L85 768.8L80.2 773.3" stroke="#fff" stroke-width="2.2" fill="none"/>
<path d="M130.6 798.3L124.6 815.7" stroke="#fff" stroke-width="1.7"/>
<path d="M330.8 798.3L324.8 815.7" stroke="#fff" stroke-width="1.7"/>
<path d="M723.3 798.4L718.2 815.3" stroke="#fff" stroke-width="1.7"/>
<circle cx="902.9" cy="801.9" r="1.8" fill="none" stroke="#fff" stroke-width="1.2"/><path d="M911.3 798.4L905.4 815.3" stroke="#fff" stroke-width="1.7"/>
</svg>
<div style="left:90px;top:124px;width:300px;height:37px;background:#000;z-index:10"></div><div style="left:91px;top:125px;width:298px;height:36px;background:#1a90e0;z-index:10"></div><div style="left:92px;top:126px;width:296px;height:34px;background:#2c363c;z-index:11"></div>
<span style="left:4.06px;top:5px;font:700 15.942px/15.942px 'Liberation Sans';color:#fff;transform:scaleX(0.9364);letter-spacing:0.32px;z-index:5">RTM3004; 1335.8794K04; 101029 (01.400 2018-12-11)</span>
<span style="left:24.40px;top:79px;font:700 15.942px/15.942px 'Liberation Sans';color:#fff;transform:scaleX(0.6768);letter-spacing:1.12px;z-index:5;-webkit-text-stroke:0.30px #fff">Undo</span>
<span style="left:87.50px;top:79px;font:700 15.942px/15.942px 'Liberation Sans';color:#fff;transform:scaleX(0.6287);letter-spacing:1.12px;z-index:5;-webkit-text-stroke:0.30px #fff">Save Setup</span>
<span style="left:164.11px;top:79px;font:700 15.942px/15.942px 'Liberation Sans';color:#fff;transform:scaleX(0.6375);letter-spacing:1.12px;z-index:5;-webkit-text-stroke:0.30px #fff">Load Setup</span>
<span style="left:239.75px;top:79px;font:700 15.942px/15.942px 'Liberation Sans';color:#fff;transform:scaleX(0.6543);letter-spacing:1.12px;z-index:5;-webkit-text-stroke:0.30px #fff">Save Wavef.</span>
<span style="left:321.94px;top:79px;font:700 15.942px/15.942px 'Liberation Sans';color:#fff;transform:scaleX(0.6593);letter-spacing:1.12px;z-index:5;-webkit-text-stroke:0.30px #fff">Menu Hist.</span>
<span style="left:415.00px;top:79px;font:700 15.942px/15.942px 'Liberation Sans';color:#fff;transform:scaleX(0.6444);letter-spacing:1.12px;z-index:5;-webkit-text-stroke:0.30px #fff">Zoom</span>
<span style="left:498.01px;top:79px;font:700 15.942px/15.942px 'Liberation Sans';color:#fff;transform:scaleX(0.5912);letter-spacing:1.12px;z-index:5;-webkit-text-stroke:0.30px #fff">FFT</span>
<span style="left:555.50px;top:79px;font:700 15.942px/15.942px 'Liberation Sans';color:#fff;transform:scaleX(0.6558);letter-spacing:1.12px;z-index:5;-webkit-text-stroke:0.30px #fff">Annotation</span>
<span style="left:63.73px;top:107px;font:400 22.971px/22.971px 'Liberation Sans';color:#fff;transform:scaleX(0.6678);letter-spacing:1.61px;z-index:5;-webkit-text-stroke:0.65px #fff">Start: 10 Hz</span>
<span style="left:231.93px;top:107px;font:400 22.971px/22.971px 'Liberation Sans';color:#fff;transform:scaleX(0.6746);letter-spacing:1.61px;z-index:5;-webkit-text-stroke:0.65px #fff">Stop: 25 MHz</span>
<span style="left:399.63px;top:107px;font:400 22.971px/22.971px 'Liberation Sans';color:#fff;transform:scaleX(0.6728);letter-spacing:1.61px;z-index:5;-webkit-text-stroke:0.65px #fff">Points: 500 Pts/</span>
<span style="left:874.31px;top:107px;font:400 22.971px/22.971px 'Liberation Sans';color:#fff;transform:scaleX(0.6874);letter-spacing:1.61px;z-index:5;-webkit-text-stroke:0.65px #fff">Gen.:</span>
<span style="left:1042.50px;top:107px;font:400 22.971px/22.971px 'Liberation Sans';color:#fff;transform:scaleX(0.6998);letter-spacing:1.61px;z-index:5;-webkit-text-stroke:0.65px #fff">Ampl.: 100 mVpp</span>
<span style="left:101.62px;top:131px;font:400 22.971px/22.971px 'Liberation Sans';color:#fff;transform:scaleX(0.6793);letter-spacing:1.61px;z-index:12;-webkit-text-stroke:0.65px #fff">Frequency: 16.1 MHz</span>
<span style="left:1211.70px;top:26px;font:400 15.942px/15.942px 'Liberation Sans';color:#fff;transform:scaleX(0.6805);letter-spacing:1.12px;z-index:5">2019-02-17</span>
<span style="left:1244.13px;top:41px;font:400 15.942px/15.942px 'Liberation Sans';color:#fff;transform:scaleX(0.6715);letter-spacing:1.12px;z-index:5">17:31</span>
<span style="left:989.00px;top:153px;font:400 20.870px/20.870px 'Liberation Sans';color:#fff;transform:scaleX(0.7516);letter-spacing:1.46px;z-index:5;-webkit-text-stroke:0.65px #fff">TL974IN Voltage Follower</span>
<span style="left:11.70px;top:232px;font:700 18.696px/18.696px 'Liberation Sans';color:#000;transform:scaleX(0.6286);letter-spacing:1.31px;z-index:5;-webkit-text-stroke:0.65px #000">G</span>
<span style="left:11.36px;top:385px;font:400 18.696px/18.696px 'Liberation Sans';color:#b45c00;transform:scaleX(0.6364);letter-spacing:1.31px;z-index:5;-webkit-text-stroke:0.65px #b45c00">P</span>
<span style="left:1201.00px;top:234px;font:400 17.536px/17.536px 'Liberation Sans';color:#fff;transform:scaleX(0.7778);letter-spacing:1.23px;z-index:5;-webkit-text-stroke:0.65px #fff">2</span>
<span style="left:1200.80px;top:422px;font:400 17.246px/17.246px 'Liberation Sans';color:#fff;transform:scaleX(0.8667);letter-spacing:1.21px;z-index:5;-webkit-text-stroke:0.65px #fff">2</span>
<span style="left:55.40px;top:661px;font:400 16.812px/16.812px 'Liberation Sans';color:#fff;transform:scaleX(0.8016);letter-spacing:1.18px;z-index:5;-webkit-text-stroke:0.65px #fff">Bode Plot</span>
<span style="left:49.99px;top:695px;font:400 17.391px/17.391px 'Liberation Sans';color:#fff;transform:scaleX(0.8103);letter-spacing:1.22px;z-index:5;-webkit-text-stroke:0.65px #fff">Marker</span>
<span style="left:180.65px;top:695px;font:400 17.391px/17.391px 'Liberation Sans';color:#fff;transform:scaleX(0.7461);letter-spacing:1.22px;z-index:5;-webkit-text-stroke:0.65px #fff">Frequency</span>
<span style="left:369.40px;top:695px;font:400 17.391px/17.391px 'Liberation Sans';color:#fff;transform:scaleX(0.7508);letter-spacing:1.22px;z-index:5;-webkit-text-stroke:0.65px #fff">Gain</span>
<span style="left:509.74px;top:695px;font:400 17.391px/17.391px 'Liberation Sans';color:#fff;transform:scaleX(0.7623);letter-spacing:1.22px;z-index:5;-webkit-text-stroke:0.65px #fff">Phase</span>
<span style="left:86.40px;top:717px;font:400 17.391px/17.391px 'Liberation Sans';color:#fff;transform:scaleX(0.9000);letter-spacing:1.22px;z-index:5;-webkit-text-stroke:0.65px #fff">1</span>
<span style="left:213.58px;top:717px;font:400 17.391px/17.391px 'Liberation Sans';color:#fff;transform:scaleX(0.7227);letter-spacing:1.22px;z-index:5;-webkit-text-stroke:0.65px #fff">10 Hz</span>
<span style="left:347.00px;top:717px;font:400 17.391px/17.391px 'Liberation Sans';color:#fff;transform:scaleX(0.7091);letter-spacing:1.22px;z-index:5;-webkit-text-stroke:0.65px #fff">-0.01 dB</span>
<span style="left:510.00px;top:717px;font:400 17.391px/17.391px 'Liberation Sans';color:#fff;transform:scaleX(0.6946);letter-spacing:1.22px;z-index:5;-webkit-text-stroke:0.65px #fff">-0.05 °</span>
<span style="left:88.80px;top:739px;font:400 17.391px/17.391px 'Liberation Sans';color:#000;transform:scaleX(0.8556);letter-spacing:1.22px;z-index:5;-webkit-text-stroke:0.65px #000">2</span>
<span style="left:187.75px;top:739px;font:400 17.391px/17.391px 'Liberation Sans';color:#000;transform:scaleX(0.7501);letter-spacing:1.22px;z-index:5;-webkit-text-stroke:0.65px #000">16.1 MHz</span>
<span style="left:347.00px;top:739px;font:400 17.391px/17.391px 'Liberation Sans';color:#000;transform:scaleX(0.7091);letter-spacing:1.22px;z-index:5;-webkit-text-stroke:0.65px #000">-3.01 dB</span>
<span style="left:501.80px;top:739px;font:400 17.391px/17.391px 'Liberation Sans';color:#000;transform:scaleX(0.7025);letter-spacing:1.22px;z-index:5;-webkit-text-stroke:0.65px #000">-53.88 °</span>
<span style="left:187.75px;top:760px;font:400 17.391px/17.391px 'Liberation Sans';color:#fff;transform:scaleX(0.7501);letter-spacing:1.22px;z-index:5;-webkit-text-stroke:0.65px #fff">16.1 MHz</span>
<span style="left:367.10px;top:760px;font:400 17.391px/17.391px 'Liberation Sans';color:#fff;transform:scaleX(0.7007);letter-spacing:1.22px;z-index:5;-webkit-text-stroke:0.65px #fff">-3 dB</span>
<span style="left:501.80px;top:760px;font:400 17.391px/17.391px 'Liberation Sans';color:#fff;transform:scaleX(0.7025);letter-spacing:1.22px;z-index:5;-webkit-text-stroke:0.65px #fff">-53.83 °</span>
<span style="left:44.75px;top:760px;font:400 18.841px/18.841px 'Liberation Sans';color:#fff;transform:scaleX(0.7708);letter-spacing:1.32px;z-index:5;-webkit-text-stroke:0.65px #fff">Δ</span>
<span style="left:59.46px;top:759px;font:400 19.130px/19.130px 'Liberation Sans';color:#fff;transform:scaleX(0.5388);letter-spacing:1.34px;z-index:5;-webkit-text-stroke:0.65px #fff">(1</span>
<span style="left:87.75px;top:759px;font:400 19.130px/19.130px 'Liberation Sans';color:#fff;transform:scaleX(0.6262);letter-spacing:1.34px;z-index:5;-webkit-text-stroke:0.65px #fff">2)</span>
<span style="left:690.22px;top:710px;font:400 33.188px/33.188px 'Liberation Sans';color:#000;transform:scaleX(0.5795);letter-spacing:2.32px;z-index:5;-webkit-text-stroke:0.20px #000">C1</span>
<span style="left:745.27px;top:710px;font:400 33.188px/33.188px 'Liberation Sans';color:#000;transform:scaleX(0.6339);letter-spacing:2.32px;z-index:5;-webkit-text-stroke:0.20px #000">C2</span>
<span style="left:691.10px;top:757px;font:700 14.928px/14.928px 'Liberation Sans';color:#fff;transform:scaleX(0.7039);letter-spacing:1.04px;z-index:5;-webkit-text-stroke:0.30px #fff">Input</span>
<span style="left:741.00px;top:757px;font:700 14.928px/14.928px 'Liberation Sans';color:#fff;transform:scaleX(0.7172);letter-spacing:1.04px;z-index:5;-webkit-text-stroke:0.30px #fff">Output</span>
<span style="left:831.19px;top:757px;font:700 14.928px/14.928px 'Liberation Sans';color:#fff;transform:scaleX(0.7109);letter-spacing:1.04px;z-index:5;-webkit-text-stroke:0.30px #fff">Run</span>
<span style="left:876.97px;top:757px;font:700 14.928px/14.928px 'Liberation Sans';color:#fff;transform:scaleX(0.7264);letter-spacing:1.04px;z-index:5;-webkit-text-stroke:0.30px #fff">Repeat</span>
<span style="left:936.80px;top:757px;font:700 14.928px/14.928px 'Liberation Sans';color:#fff;transform:scaleX(0.6961);letter-spacing:1.04px;z-index:5;-webkit-text-stroke:0.30px #fff">Reset</span>
<span style="left:1019.70px;top:757px;font:700 14.928px/14.928px 'Liberation Sans';color:#fff;transform:scaleX(0.6948);letter-spacing:1.04px;z-index:5;-webkit-text-stroke:0.30px #fff">Setup</span>
<span style="left:1076.85px;top:757px;font:700 14.928px/14.928px 'Liberation Sans';color:#fff;transform:scaleX(0.7515);letter-spacing:1.04px;z-index:5;-webkit-text-stroke:0.30px #fff">Help</span>
<span style="left:1133.97px;top:757px;font:700 14.928px/14.928px 'Liberation Sans';color:#fff;transform:scaleX(0.7252);letter-spacing:1.04px;z-index:5;-webkit-text-stroke:0.30px #fff">Exit</span>
<span style="left:1085.98px;top:711px;font:400 33.333px/33.333px 'Liberation Sans';color:#fff;transform:scaleX(0.5235);letter-spacing:2.33px;z-index:5;-webkit-text-stroke:0.65px #fff">?</span>
<span style="left:11.44px;top:791px;font:400 22.899px/22.899px 'Liberation Sans';color:#000;transform:scaleX(0.5631);letter-spacing:1.60px;z-index:5;-webkit-text-stroke:0.20px #000">C1</span>
<span style="left:54.57px;top:791px;font:400 26.522px/26.522px 'Liberation Sans';color:#fff;transform:scaleX(0.7165);letter-spacing:1.86px;z-index:5;-webkit-text-stroke:0.15px #fff">18.2</span>
<span style="left:101.28px;top:798px;font:400 18.841px/18.841px 'Liberation Sans';color:#fff;transform:scaleX(0.7172);letter-spacing:1.32px;z-index:5;-webkit-text-stroke:0.65px #fff">mV</span>
<span style="left:181.90px;top:786px;font:400 15.797px/15.797px 'Liberation Sans';color:#fff;transform:scaleX(0.6363);letter-spacing:1.11px;z-index:5;-webkit-text-stroke:0.65px #fff">AC</span>
<span style="left:176.13px;top:809px;font:400 14.203px/14.203px 'Liberation Sans';color:#fff;transform:scaleX(0.6666);letter-spacing:0.99px;z-index:5;-webkit-text-stroke:0.15px #fff">10:1</span>
<span style="left:212.39px;top:791px;font:400 22.754px/22.754px 'Liberation Sans';color:#000;transform:scaleX(0.6099);letter-spacing:1.59px;z-index:5;-webkit-text-stroke:0.20px #000">C2</span>
<span style="left:254.56px;top:791px;font:400 26.522px/26.522px 'Liberation Sans';color:#fff;transform:scaleX(0.7220);letter-spacing:1.86px;z-index:5;-webkit-text-stroke:0.15px #fff">12.2</span>
<span style="left:301.48px;top:798px;font:400 18.841px/18.841px 'Liberation Sans';color:#fff;transform:scaleX(0.7172);letter-spacing:1.32px;z-index:5;-webkit-text-stroke:0.65px #fff">mV</span>
<span style="left:383.20px;top:786px;font:400 15.797px/15.797px 'Liberation Sans';color:#fff;transform:scaleX(0.6098);letter-spacing:1.11px;z-index:5;-webkit-text-stroke:0.65px #fff">AC</span>
<span style="left:376.62px;top:809px;font:400 14.203px/14.203px 'Liberation Sans';color:#fff;transform:scaleX(0.6834);letter-spacing:0.99px;z-index:5;-webkit-text-stroke:0.15px #fff">10:1</span>
<span style="left:412.72px;top:791px;font:400 22.029px/22.029px 'Liberation Sans';color:#000;transform:scaleX(0.6751);letter-spacing:1.54px;z-index:5;-webkit-text-stroke:0.20px #000">C3</span>
<span style="left:512.91px;top:791px;font:400 22.029px/22.029px 'Liberation Sans';color:#000;transform:scaleX(0.6891);letter-spacing:1.54px;z-index:5;-webkit-text-stroke:0.20px #000">C4</span>
<span style="left:608.50px;top:793px;font:400 18.696px/18.696px 'Liberation Sans';color:#000;transform:scaleX(0.6859);letter-spacing:1.31px;z-index:5;-webkit-text-stroke:0.65px #000">Gain</span>
<span style="left:681.04px;top:791px;font:400 26.232px/26.232px 'Liberation Sans';color:#fff;transform:scaleX(0.7115);letter-spacing:1.84px;z-index:5;-webkit-text-stroke:0.15px #fff">6</span>
<span style="left:700.00px;top:798px;font:400 18.841px/18.841px 'Liberation Sans';color:#fff;transform:scaleX(0.6578);letter-spacing:1.32px;z-index:5;-webkit-text-stroke:0.65px #fff">dB</span>
<span style="left:804.00px;top:794px;font:400 18.406px/18.406px 'Liberation Sans';color:#000;transform:scaleX(0.7009);letter-spacing:1.29px;z-index:5;-webkit-text-stroke:0.65px #000">Phase</span>
<span style="left:870.80px;top:791px;font:400 26.812px/26.812px 'Liberation Sans';color:#fff;transform:scaleX(0.6985);letter-spacing:1.88px;z-index:5;-webkit-text-stroke:0.15px #fff">45</span>
<span style="left:1222.14px;top:809px;font:400 16.957px/16.957px 'Liberation Sans';color:#fff;transform:scaleX(0.8627);letter-spacing:1.19px;z-index:5;-webkit-text-stroke:0.65px #fff">Menu</span>
<span style="left:1232.10px;top:770px;font:700 14.638px/14.638px 'Liberation Sans';color:#20a0f0;transform:scaleX(0.7818);letter-spacing:1.02px;z-index:5;-webkit-text-stroke:0.50px #20a0f0">R</span>
<span style="left:1243.60px;top:781px;font:700 14.638px/14.638px 'Liberation Sans';color:#20a0f0;transform:scaleX(0.9600);letter-spacing:1.02px;z-index:5;-webkit-text-stroke:0.50px #20a0f0">S</span>
<span style="left:41.00px;top:173px;font:400 12.9px/12.9px 'Liberation Mono';color:#1e90e0;transform:scaleX(0.7923);z-index:2">6 dB</span>
<span style="left:1207.34px;top:173px;font:400 12.9px/12.9px 'Liberation Mono';color:#e07000;transform:scaleX(0.7923);z-index:2">180 °</span>
<span style="left:41.00px;top:224px;font:400 12.9px/12.9px 'Liberation Mono';color:#1e90e0;transform:scaleX(0.7923);z-index:2">0 dB</span>
<span style="left:1207.34px;top:224px;font:400 12.9px/12.9px 'Liberation Mono';color:#e07000;transform:scaleX(0.7923);z-index:2">135 °</span>
<span style="left:41.00px;top:275px;font:400 12.9px/12.9px 'Liberation Mono';color:#1e90e0;transform:scaleX(0.7923);z-index:2">-6 dB</span>
<span style="left:1213.47px;top:275px;font:400 12.9px/12.9px 'Liberation Mono';color:#e07000;transform:scaleX(0.7923);z-index:2">90 °</span>
<span style="left:41.00px;top:326px;font:400 12.9px/12.9px 'Liberation Mono';color:#1e90e0;transform:scaleX(0.7923);z-index:2">-12 dB</span>
<span style="left:1213.47px;top:326px;font:400 12.9px/12.9px 'Liberation Mono';color:#e07000;transform:scaleX(0.7923);z-index:2">45 °</span>
<span style="left:41.00px;top:377px;font:400 12.9px/12.9px 'Liberation Mono';color:#1e90e0;transform:scaleX(0.7923);z-index:2">-18 dB</span>
<span style="left:1219.60px;top:377px;font:400 12.9px/12.9px 'Liberation Mono';color:#e07000;transform:scaleX(0.7923);z-index:2">0 °</span>
<span style="left:41.00px;top:428px;font:400 12.9px/12.9px 'Liberation Mono';color:#1e90e0;transform:scaleX(0.7923);z-index:2">-24 dB</span>
<span style="left:1207.34px;top:428px;font:400 12.9px/12.9px 'Liberation Mono';color:#e07000;transform:scaleX(0.7923);z-index:2">-45 °</span>
<span style="left:41.00px;top:479px;font:400 12.9px/12.9px 'Liberation Mono';color:#1e90e0;transform:scaleX(0.7923);z-index:2">-30 dB</span>
<span style="left:1207.34px;top:479px;font:400 12.9px/12.9px 'Liberation Mono';color:#e07000;transform:scaleX(0.7923);z-index:2">-90 °</span>
<span style="left:41.00px;top:530px;font:400 12.9px/12.9px 'Liberation Mono';color:#1e90e0;transform:scaleX(0.7923);z-index:2">-36 dB</span>
<span style="left:1201.20px;top:530px;font:400 12.9px/12.9px 'Liberation Mono';color:#e07000;transform:scaleX(0.7923);z-index:2">-135 °</span>
<span style="left:41.00px;top:581px;font:400 12.9px/12.9px 'Liberation Mono';color:#1e90e0;transform:scaleX(0.7923);z-index:2">-42 dB</span>
<span style="left:1201.20px;top:581px;font:400 12.9px/12.9px 'Liberation Mono';color:#e07000;transform:scaleX(0.7923);z-index:2">-180 °</span>
<span style="left:41.00px;top:632px;font:400 12.9px/12.9px 'Liberation Mono';color:#1e90e0;transform:scaleX(0.7923);z-index:2">-48 dB</span>
<span style="left:1201.20px;top:632px;font:400 12.9px/12.9px 'Liberation Mono';color:#e07000;transform:scaleX(0.7923);z-index:2">-225 °</span>
<span style="left:228.00px;top:632px;font:400 12.9px/12.9px 'Liberation Mono';color:#e6e6e6;transform:scaleX(0.7923);z-index:2">100Hz</span>
<span style="left:415.00px;top:632px;font:400 12.9px/12.9px 'Liberation Mono';color:#e6e6e6;transform:scaleX(0.7923);z-index:2">1kHz</span>
<span style="left:603.00px;top:632px;font:400 12.9px/12.9px 'Liberation Mono';color:#e6e6e6;transform:scaleX(0.7923);z-index:2">10kHz</span>
<span style="left:791.00px;top:632px;font:400 12.9px/12.9px 'Liberation Mono';color:#e6e6e6;transform:scaleX(0.7923);z-index:2">100kHz</span>
<span style="left:979.00px;top:632px;font:400 12.9px/12.9px 'Liberation Mono';color:#e6e6e6;transform:scaleX(0.7923);z-index:2">1MHz</span>
<span style="left:1166.00px;top:632px;font:400 12.9px/12.9px 'Liberation Mono';color:#e6e6e6;transform:scaleX(0.7923);z-index:2">10MHz</span>
</div></body></html>
